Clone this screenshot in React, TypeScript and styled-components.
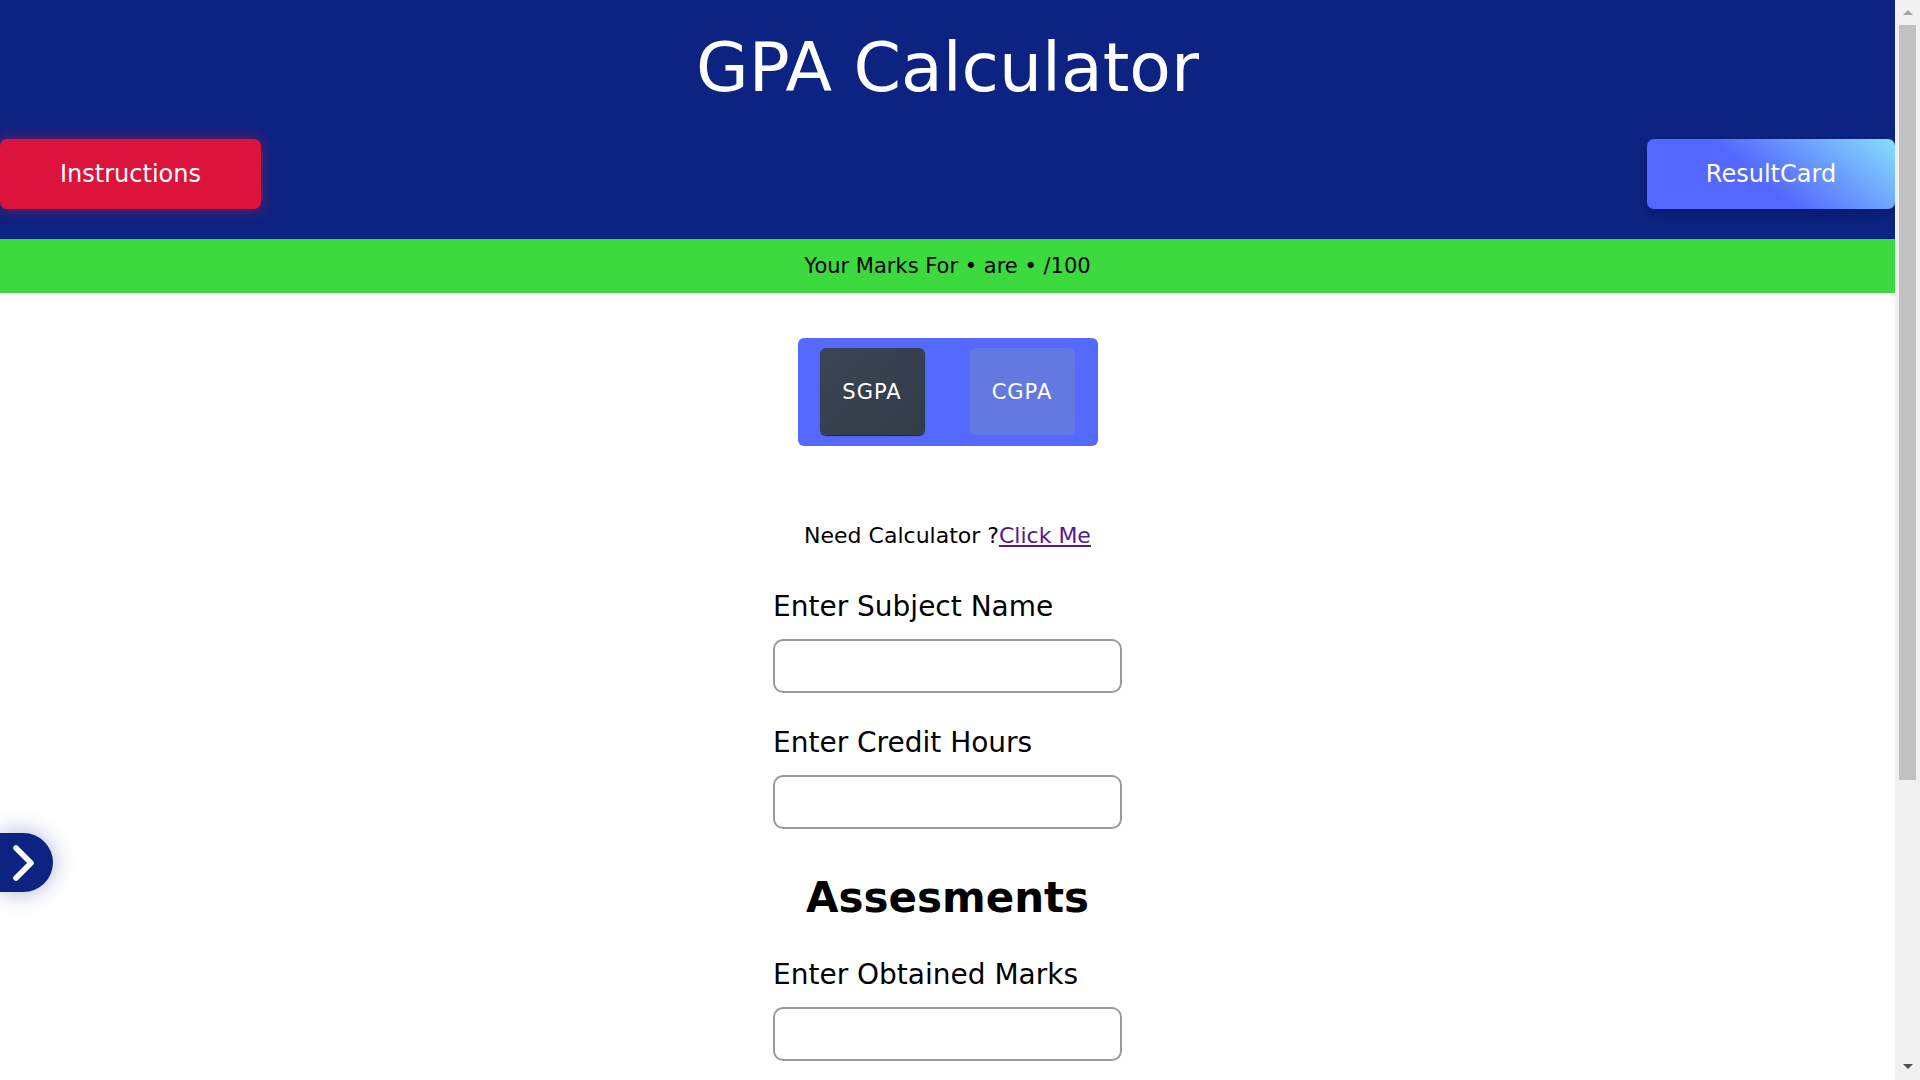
import React, { useState } from "react";
import styled, { createGlobalStyle } from "styled-components";

const GlobalStyle = createGlobalStyle`
  html {
    scrollbar-width: none;
  }
  html, body {
    margin: 0;
    padding: 0;
    background: #fff;
    font-family: "DejaVu Sans", "Liberation Sans", sans-serif;
    color: #000;
  }
`;

const Page = styled.div`
  margin-right: 25px;
`;

const Header = styled.header`
  background: #0d2382;
  padding: 28px 0 30px;
`;

const Title = styled.h1`
  margin: 0;
  color: #fff;
  text-align: center;
  font-size: 68px;
  font-weight: 400;
  line-height: 80px;
`;

const ButtonRow = styled.div`
  display: flex;
  justify-content: space-between;
  margin-top: 31px;
`;

const NavButton = styled.button<{ $variant: "danger" | "info" }>`
  height: 70px;
  width: ${({ $variant }) => ($variant === "danger" ? "261px" : "248px")};
  border: none;
  border-radius: 7px;
  color: #fff;
  font-family: inherit;
  font-size: 24px;
  cursor: pointer;
  background: ${({ $variant }) =>
    $variant === "danger"
      ? "#dc143c"
      : "linear-gradient(40deg, #5468ff 45%, #86defc 100%)"};
  box-shadow: ${({ $variant }) =>
    $variant === "danger"
      ? "0 0 14px rgba(220, 20, 60, 0.55)"
      : "0 6px 14px rgba(0, 0, 40, 0.25)"};
`;

const MarksBar = styled.div`
  background: #3cd93f;
  height: 54px;
  display: flex;
  align-items: center;
  justify-content: center;
  font-size: 21px;
`;

const Main = styled.main`
  display: flex;
  flex-direction: column;
  align-items: center;
  padding: 45px 0 70px;
`;

const ToggleGroup = styled.div`
  width: 300px;
  height: 108px;
  box-sizing: border-box;
  padding: 0 23px 1px 22px;
  background: #5669ff;
  border-radius: 6px;
  display: flex;
  align-items: center;
  justify-content: space-between;
`;

const ToggleButton = styled.button<{ $active: boolean }>`
  width: 105px;
  height: 87px;
  border: none;
  border-radius: 6px;
  color: #fff;
  font-family: inherit;
  font-size: 21px;
  letter-spacing: 1px;
  cursor: pointer;
  background: ${({ $active }) =>
    $active ? "linear-gradient(135deg, #3a4654, #323d4a)" : "#6479df"};
  box-shadow: ${({ $active }) => ($active ? "0 1px 1px #1e2228" : "none")};
`;

const CalcHint = styled.p`
  margin: 77px 0 0;
  font-size: 22px;
  line-height: 26px;

  a {
    color: #551a8b;
  }
`;

const Form = styled.form`
  width: 349px;
  display: flex;
  flex-direction: column;
  margin-top: 41px;
`;

const Label = styled.label`
  display: block;
  font-size: 28px;
  line-height: 34px;
  margin-bottom: 15px;
`;

const Field = styled.div`
  & + & {
    margin-top: 33px;
  }
`;

const TextInput = styled.input`
  display: block;
  width: 100%;
  height: 54px;
  box-sizing: border-box;
  border: 2px solid #9a9a9a;
  border-radius: 10px;
  font-family: inherit;
  font-size: 20px;
  padding: 0 12px;
  outline: none;
`;

const SectionTitle = styled.h2`
  margin: 44px 0 35px;
  text-align: center;
  font-size: 42px;
  line-height: 50px;
  font-weight: 700;
`;

const ActionRow = styled.div`
  display: flex;
  justify-content: center;
  gap: 20px;
  margin-top: 40px;
`;

const ActionButton = styled.button`
  padding: 14px 28px;
  border: none;
  border-radius: 7px;
  background: #0d2382;
  color: #fff;
  font-family: inherit;
  font-size: 20px;
`;

const SideTab = styled.button`
  position: fixed;
  left: 0;
  top: 833px;
  width: 53px;
  height: 59px;
  border: none;
  padding: 0 0 0 11px;
  border-radius: 0 30px 30px 0;
  background: #0d2382;
  box-shadow: 0 0 22px rgba(13, 35, 130, 0.35);
  display: flex;
  align-items: center;
  cursor: pointer;
`;

/* window scrollbar, drawn as it appears in the capture */
const ScrollRail = styled.div`
  position: fixed;
  top: 0;
  right: 0;
  width: 25px;
  height: 100vh;
  background: #f1f1f1;
  display: flex;
  flex-direction: column;
  align-items: center;
`;

const ScrollArrow = styled.div<{ $dir: "up" | "down" }>`
  height: 25px;
  width: 100%;
  display: flex;
  justify-content: center;
  align-items: ${({ $dir }) => ($dir === "up" ? "flex-start" : "flex-end")};
  padding: ${({ $dir }) => ($dir === "up" ? "10px 0 0" : "0 0 11px")};
  box-sizing: border-box;

  &::before {
    content: "";
    width: 0;
    height: 0;
    border-left: 5px solid transparent;
    border-right: 5px solid transparent;
    ${({ $dir }) =>
      $dir === "up"
        ? "border-bottom: 5px solid #a3a3a3;"
        : "border-top: 5px solid #505050;"}
  }
`;

const ScrollThumb = styled.div`
  width: 17px;
  height: 755px;
  background: #c1c1c1;
`;

const ScrollSpacer = styled.div`
  flex: 1;
`;

const App: React.FC = () => {
  const [mode, setMode] = useState<"SGPA" | "CGPA">("SGPA");

  return (
    <>
      <GlobalStyle />
      <Page>
        <Header>
          <Title>GPA Calculator</Title>
          <ButtonRow>
            <NavButton $variant="danger">Instructions</NavButton>
            <NavButton $variant="info">ResultCard</NavButton>
          </ButtonRow>
        </Header>
        <MarksBar>Your Marks For • are • /100</MarksBar>
        <Main>
          <ToggleGroup>
            <ToggleButton $active={mode === "SGPA"} onClick={() => setMode("SGPA")}>
              SGPA
            </ToggleButton>
            <ToggleButton $active={mode === "CGPA"} onClick={() => setMode("CGPA")}>
              CGPA
            </ToggleButton>
          </ToggleGroup>
          <CalcHint>
            Need Calculator ?<a href="#calc">Click Me</a>
          </CalcHint>
          <Form onSubmit={(e) => e.preventDefault()}>
            <Field>
              <Label>Enter Subject Name</Label>
              <TextInput type="text" />
            </Field>
            <Field>
              <Label>Enter Credit Hours</Label>
              <TextInput type="number" />
            </Field>
            <SectionTitle>Assesments</SectionTitle>
            <Field>
              <Label>Enter Obtained Marks</Label>
              <TextInput type="number" />
            </Field>
            <Field>
              <Label>Enter Total Marks</Label>
              <TextInput type="number" />
            </Field>
            <Field>
              <Label>Enter Weightage</Label>
              <TextInput type="number" />
            </Field>
            <ActionRow>
              <ActionButton type="button">Add</ActionButton>
              <ActionButton type="submit">Calculate</ActionButton>
            </ActionRow>
          </Form>
        </Main>
      </Page>
      <SideTab aria-label="Open menu">
        <svg width="30" height="40" viewBox="0 0 30 40">
          <path
            d="M5 5 L20 20 L5 35"
            fill="none"
            stroke="#fff"
            strokeWidth="5.5"
            strokeLinecap="round"
            strokeLinejoin="round"
          />
        </svg>
      </SideTab>
      <ScrollRail aria-hidden="true">
        <ScrollArrow $dir="up" />
        <ScrollThumb />
        <ScrollSpacer />
        <ScrollArrow $dir="down" />
      </ScrollRail>
    </>
  );
};

export default App;
